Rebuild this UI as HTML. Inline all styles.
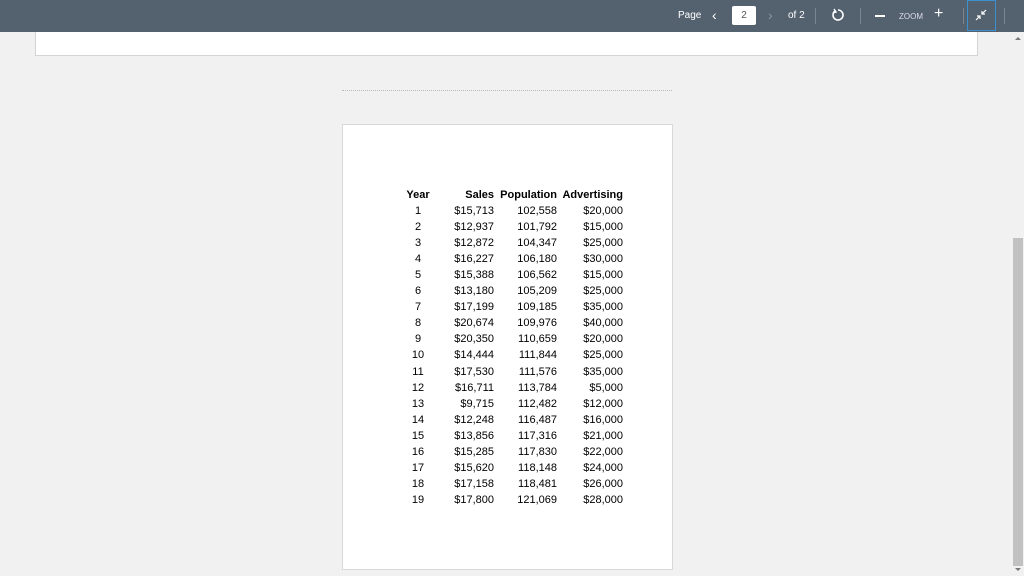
<!DOCTYPE html><html><head><style>
body{margin:0;width:1024px;height:576px;background:#f1f1f1;position:relative;overflow:hidden;font-family:"Liberation Sans",sans-serif}
.tb{position:absolute;left:0;top:0;width:1024px;height:32px;background:#546270;color:#fff}
.t{position:absolute;font-size:10px;top:10px}
.top{position:absolute;left:35px;top:32px;width:943px;height:24px;background:#fff;border:1px solid #d4d4d4;border-top:none;box-sizing:border-box}
.dash{position:absolute;left:342px;top:90px;width:330px;border-top:1px dotted #bbb}
.pg{position:absolute;left:342px;top:124px;width:331px;height:446px;background:#fff;border:1px solid #d8d8d8;box-sizing:border-box}
.sb{position:absolute;left:1012px;top:32px;width:12px;height:544px;background:#f1f1f1}
.th{position:absolute;left:1013px;top:238px;width:10px;height:328px;background:#c1c1c1}
table{position:absolute;left:402px;top:187px;border-collapse:collapse;font-size:11px;color:#000}
td{padding:0;height:16.06px;text-align:right;white-space:nowrap}
</style></head><body>
<div class="tb">
<span class="t" style="left:678px">Page</span>
<span class="t" style="left:712px;top:7px;font-size:14px">&lsaquo;</span>
<div style="position:absolute;left:732px;top:6px;width:24px;height:19px;background:#fff;border-radius:2px;color:#555;font-size:10px;text-align:center;line-height:19px">2</div>
<span class="t" style="left:768px;top:7px;font-size:14px;color:#8a96a0">&rsaquo;</span>
<span class="t" style="left:788px">of 2</span>
<div style="position:absolute;left:815px;top:8px;width:1px;height:16px;background:#7a8792"></div>
<svg style="position:absolute;left:831px;top:8px" width="14" height="14" viewBox="0 0 14 14"><path d="M4 3 A5 5 0 1 0 7 2" fill="none" stroke="#fff" stroke-width="1.6"/><path d="M3 1 L5 4 L2 5" fill="none" stroke="#fff" stroke-width="1.4"/></svg>
<div style="position:absolute;left:860px;top:8px;width:1px;height:16px;background:#7a8792"></div>
<div style="position:absolute;left:875px;top:15px;width:10px;height:1.5px;background:#fff"></div>
<span class="t" style="left:899px;font-size:8px;top:12px;color:#dde">ZOOM</span>
<span class="t" style="left:934px;top:5px;font-size:16px">+</span>
<div style="position:absolute;left:963px;top:8px;width:1px;height:16px;background:#7a8792"></div>
<div style="position:absolute;left:967px;top:0;width:29px;height:31px;border:1px solid #3d8fd0;box-sizing:border-box"></div>
<svg style="position:absolute;left:975px;top:9px" width="12" height="12" viewBox="0 0 12 12"><path d="M11 1 L7 5 M7 2 V5 H10 M1 11 L5 7 M5 10 V7 H2" fill="none" stroke="#fff" stroke-width="1.2"/></svg>
<div style="position:absolute;left:1004px;top:8px;width:1px;height:16px;background:#7a8792"></div>
</div>
<div class="top"></div>
<div class="dash"></div>
<div class="pg"></div>
<div class="sb"></div><div class="th"></div>
<div style="position:absolute;left:1015px;top:37px;border:3px solid transparent;border-bottom:3px solid #777;border-top:none"></div>
<div style="position:absolute;left:1015px;top:568px;border:3px solid transparent;border-top:3px solid #777;border-bottom:none"></div>
<table>
<tr style="font-weight:bold"><td style="width:32px;text-align:center">Year</td><td style="width:60px">Sales</td><td style="width:63px">Population</td><td style="width:66px">Advertising</td></tr>
<tr><td style="text-align:center">1</td><td>$15,713</td><td>102,558</td><td>$20,000</td></tr>
<tr><td style="text-align:center">2</td><td>$12,937</td><td>101,792</td><td>$15,000</td></tr>
<tr><td style="text-align:center">3</td><td>$12,872</td><td>104,347</td><td>$25,000</td></tr>
<tr><td style="text-align:center">4</td><td>$16,227</td><td>106,180</td><td>$30,000</td></tr>
<tr><td style="text-align:center">5</td><td>$15,388</td><td>106,562</td><td>$15,000</td></tr>
<tr><td style="text-align:center">6</td><td>$13,180</td><td>105,209</td><td>$25,000</td></tr>
<tr><td style="text-align:center">7</td><td>$17,199</td><td>109,185</td><td>$35,000</td></tr>
<tr><td style="text-align:center">8</td><td>$20,674</td><td>109,976</td><td>$40,000</td></tr>
<tr><td style="text-align:center">9</td><td>$20,350</td><td>110,659</td><td>$20,000</td></tr>
<tr><td style="text-align:center">10</td><td>$14,444</td><td>111,844</td><td>$25,000</td></tr>
<tr><td style="text-align:center">11</td><td>$17,530</td><td>111,576</td><td>$35,000</td></tr>
<tr><td style="text-align:center">12</td><td>$16,711</td><td>113,784</td><td>$5,000</td></tr>
<tr><td style="text-align:center">13</td><td>$9,715</td><td>112,482</td><td>$12,000</td></tr>
<tr><td style="text-align:center">14</td><td>$12,248</td><td>116,487</td><td>$16,000</td></tr>
<tr><td style="text-align:center">15</td><td>$13,856</td><td>117,316</td><td>$21,000</td></tr>
<tr><td style="text-align:center">16</td><td>$15,285</td><td>117,830</td><td>$22,000</td></tr>
<tr><td style="text-align:center">17</td><td>$15,620</td><td>118,148</td><td>$24,000</td></tr>
<tr><td style="text-align:center">18</td><td>$17,158</td><td>118,481</td><td>$26,000</td></tr>
<tr><td style="text-align:center">19</td><td>$17,800</td><td>121,069</td><td>$28,000</td></tr>
</table>
</body></html>
